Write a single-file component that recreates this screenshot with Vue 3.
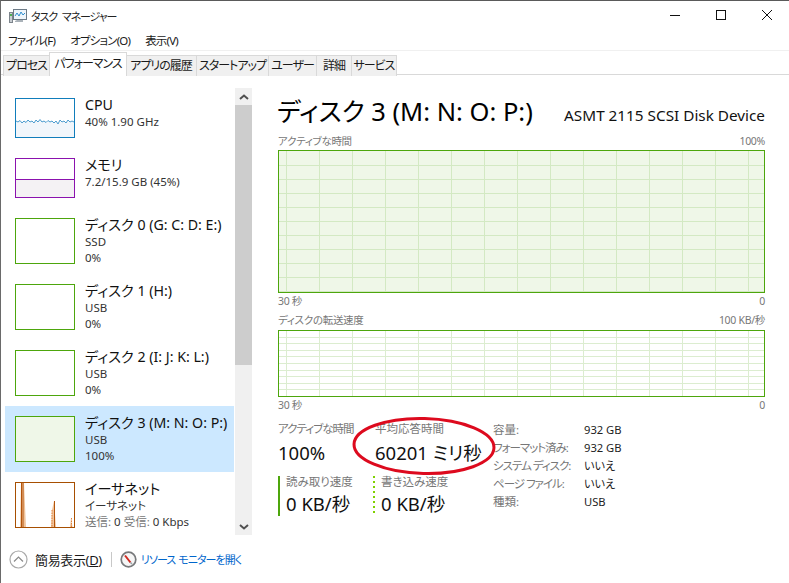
<script setup>
const tabs = ['プロセス', 'パフォーマンス', 'アプリの履歴', 'スタートアップ', 'ユーザー', '詳細', 'サービス']
const menus = ['ファイル(F)', 'オプション(O)', '表示(V)']
const items = [
  { kind: 'cpu', cls: 'short', name: 'CPU', lines: ['40%  1.90 GHz'] },
  { kind: 'mem', cls: 'short', name: 'メモリ', lines: ['7.2/15.9 GB (45%)'] },
  { kind: 'disk', name: 'ディスク 0 (G: C: D: E:)', lines: ['SSD', '0%'] },
  { kind: 'disk', name: 'ディスク 1 (H:)', lines: ['USB', '0%'] },
  { kind: 'disk', name: 'ディスク 2 (I: J: K: L:)', lines: ['USB', '0%'] },
  { kind: 'full', active: true, name: 'ディスク 3 (M: N: O: P:)', lines: ['USB', '100%'] },
  { kind: 'net', name: 'イーサネット', lines: ['イーサネット'], net: true }
]
const facts = [
  { k: '容量:', v: '932 GB' },
  { k: 'フォーマット済み:', v: '932 GB', tight: true },
  { k: 'システム ディスク:', v: 'いいえ', tight: true },
  { k: 'ページ ファイル:', v: 'いいえ', tight: true },
  { k: '種類:', v: 'USB' }
]
</script>

<template>
  <div class="win">
    <header class="titlebar">
      <svg class="appicon" width="18" height="16" viewBox="0 0 18 16">
        <rect x="0.5" y="4.5" width="3" height="10" fill="#c9ced3" stroke="#7d858c" />
        <rect x="1" y="6" width="2" height="2" fill="#4caf50" />
        <rect x="4.5" y="1.5" width="13" height="10" fill="#eef5fb" stroke="#6c7a86" />
        <path d="M6 8 L8 5 L10 8 L12 4 L14 7 L16 5" fill="none" stroke="#2f8fd0" stroke-width="1" />
        <path d="M8 12 H14 V14 H6 V13" fill="#aab2b9" />
      </svg>
      <span class="wintitle">タスク マネージャー</span>
      <div class="caption">
        <svg width="12" height="12" viewBox="0 0 12 12"><path d="M1 6.500 H11" stroke="#111" /></svg>
        <svg width="12" height="12" viewBox="0 0 12 12"><rect x="1.500" y="1.500" width="9" height="9" fill="none" stroke="#111" /></svg>
        <svg width="12" height="12" viewBox="0 0 12 12"><path d="M1 1 L11 11 M11 1 L1 11" stroke="#111" /></svg>
      </div>
    </header>
    <nav class="menu">
      <span v-for="m in menus" :key="m">{{ m }}</span>
    </nav>
    <div class="tabs">
      <span v-for="(t, i) in tabs" :key="t" class="tab" :class="{ sel: i === 1 }">{{ t }}</span>
    </div>

    <div class="body">
      <aside class="side">
        <div class="list">
          <div v-for="it in items" :key="it.name" class="row" :class="[it.cls, { active: it.active }]">
            <div class="thumb" :class="it.kind">
              <svg v-if="it.kind === 'cpu'" width="58" height="38" viewBox="0 0 58 38">
                <path d="M0 22 L2 23 L4 21.5 L6 24 L8 22 L10 23.5 L12 21 L14 23 L16 22 L18 24 L20 21 L22 23 L24 20.5 L26 23 L28 22 L30 23.5 L32 21.5 L34 23 L36 22 L38 24 L40 22 L42 25 L44 21 L46 23 L48 22 L50 24 L52 21 L54 23 L56 22 L58 23 V38 H0 Z" fill="#f1f6fb" />
                <path d="M0 22 L2 23 L4 21.5 L6 24 L8 22 L10 23.5 L12 21 L14 23 L16 22 L18 24 L20 21 L22 23 L24 20.5 L26 23 L28 22 L30 23.5 L32 21.5 L34 23 L36 22 L38 24 L40 22 L42 25 L44 21 L46 23 L48 22 L50 24 L52 21 L54 23 L56 22 L58 23" fill="none" stroke="#4b9ccf" />
              </svg>
              <div v-else-if="it.kind === 'mem'" class="memfill"></div>
              <svg v-else-if="it.kind === 'net'" width="58" height="44" viewBox="0 0 58 44">
                <path d="M4 44 L5 0 H8 L10 44 Z M35 44 L36 27 L38 18 L40 44 Z M54 44 L55 35 L56.500 44 Z" fill="#f0c49c" />
                <path d="M5.500 0 L5.500 44 M7 0 L7 44 M38.500 18 V44" fill="none" stroke="#b4550c" />
                <path d="M36 27 V44 M55.500 35 V44" fill="none" stroke="#e0803a" stroke-dasharray="1.500 1" />
              </svg>
            </div>
            <div class="info">
              <div class="name">{{ it.name }}</div>
              <div v-for="l in it.lines" :key="l" class="sub">{{ l }}</div>
              <div v-if="it.net" class="sub"><span class="dim">送信:</span> 0 <span class="dim">受信:</span> 0 Kbps</div>
            </div>
          </div>
        </div>
        <div class="scroll">
          <div class="arrow">
            <svg width="10" height="6" viewBox="0 0 10 6"><path d="M1 5 L5 1.500 L9 5" fill="none" stroke="#505050" stroke-width="2" /></svg>
          </div>
          <div class="scrollthumb"></div>
          <div class="track"></div>
          <div class="arrow">
            <svg width="10" height="6" viewBox="0 0 10 6"><path d="M1 1 L5 4.500 L9 1" fill="none" stroke="#505050" stroke-width="2" /></svg>
          </div>
        </div>
      </aside>

      <main class="main">
        <div class="head">
          <h1>ディスク 3 (M: N: O: P:)</h1>
          <span class="model">ASMT 2115 SCSI Disk Device</span>
        </div>
        <div class="axis top"><span>アクティブな時間</span><span>100%</span></div>
        <div class="graph big"></div>
        <div class="axis"><span>30 秒</span><span>0</span></div>
        <div class="axis second"><span>ディスクの転送速度</span><span>100 KB/秒</span></div>
        <div class="graph small"></div>
        <div class="axis"><span>30 秒</span><span>0</span></div>

        <section class="stats">
          <div class="perf">
            <div class="cell c1"><div class="lab tight">アクティブな時間</div><div class="val">100%</div></div>
            <div class="cell c2"><div class="lab">平均応答時間</div><div class="val">60201 ミリ秒</div></div>
            <div class="cell c1 rate solid"><div class="lab">読み取り速度</div><div class="val">0 KB/秒</div></div>
            <div class="cell c2 rate dotted"><div class="lab">書き込み速度</div><div class="val">0 KB/秒</div></div>
          </div>
          <dl class="facts">
            <template v-for="f in facts" :key="f.k">
              <dt :class="{ tight: f.tight }">{{ f.k }}</dt>
              <dd>{{ f.v }}</dd>
            </template>
          </dl>
          <svg class="ring" width="150" height="64" viewBox="0 0 150 64">
            <ellipse cx="75" cy="32" rx="70" ry="27.500" fill="none" stroke="#dd0a1e" stroke-width="3" transform="rotate(1.500 75 32)" />
          </svg>
        </section>
      </main>
    </div>

    <footer class="foot">
      <svg width="19" height="19" viewBox="0 0 19 19">
        <circle cx="9.500" cy="9.500" r="8.500" fill="none" stroke="#a8a8a8" stroke-width="1.200" />
        <path d="M5 11.500 L9.500 7 L14 11.500" fill="none" stroke="#8a8a8a" stroke-width="1.200" />
      </svg>
      <span class="less">簡易表示(<u>D</u>)</span>
      <i class="sep"></i>
      <svg width="17" height="17" viewBox="0 0 17 17">
        <circle cx="8.500" cy="8.500" r="7.300" fill="#f6f6f6" stroke="#77797b" stroke-width="1.700" />
        <path d="M5 4.500 L10.500 11.500" stroke="#cf2a20" stroke-width="2" />
        <path d="M10.500 11.500 L12 13" stroke="#9aa0a5" stroke-width="1.500" />
      </svg>
      <a class="link">リソース モニターを開く</a>
    </footer>
  </div>
</template>

<style>
html, body { margin: 0; background: #fff; }
</style>

<style scoped>
.win {
  width: 789px;
  height: 583px;
  box-sizing: border-box;
  overflow: hidden;
  border-top: 1px solid #5a5a5a;
  border-left: 1px solid #6a6a6a;
  display: flex;
  flex-direction: column;
  background: #fff;
  color: #1a1a1a;
  font-family: "Noto Sans", "Noto Sans CJK JP", sans-serif;
  font-feature-settings: "palt";
  font-size: 12px;
}
.titlebar { height: 29px; flex: none; display: flex; align-items: center; padding-left: 8px; }
.appicon { margin-right: 4px; }
.wintitle { font-size: 11px; letter-spacing: -1.100px; word-spacing: 3px; color: #222; }
.caption { margin-left: auto; margin-top: -2px; display: flex; gap: 34px; padding-right: 16px; }
.menu { height: 20px; flex: none; display: flex; gap: 15px; align-items: center; padding-left: 7px; font-size: 11.500px; letter-spacing: -0.800px; }
.tabs {
  flex: none;
  height: 25px;
  box-sizing: border-box;
  border-top: 1px solid #f0f0f0;
  border-bottom: 1px solid #d9d9d9;
  margin-left: -1px;
  padding: 1px 0 0 3px;
  display: grid;
  grid-template-columns: 47px 76px 71px 72px 48px 35px 45px;
  justify-content: start;
  align-items: end;
}
.tab {
  height: 21px;
  box-sizing: border-box;
  border: 1px solid #d9d9d9;
  border-left-width: 0;
  border-bottom: 0;
  background: #f0f0f0;
  text-align: center;
  line-height: 20px;
  white-space: nowrap;
  margin-bottom: -1px;
  letter-spacing: -1px;
}
.tab:first-child { border-left-width: 1px; }
.tab.sel {
  height: 24px;
  background: #fff;
  border-left-width: 1px;
  line-height: 21px;
  position: relative;
  margin-right: -1px;
  margin-left: -1px;
}
.body { flex: 1; min-height: 0; display: flex; }
.side { width: 251px; flex: none; display: flex; padding-top: 13px; height: 460px; box-sizing: border-box; }
.list { width: 229px; margin-left: 4px; flex: none; height: 447px; overflow: hidden; }
.row { height: 66px; box-sizing: border-box; padding: 10px 0 0 10px; display: flex; }
.row.short { height: 60px; }
.row.active { background: #cce8ff; }
.thumb {
  width: 60px;
  height: 46px;
  flex: none;
  box-sizing: border-box;
  border: 1px solid #4da60c;
  background: #fff;
  overflow: hidden;
}
.thumb svg { display: block; }
.row.short .thumb { height: 40px; }
.thumb.cpu { border-color: #117dbb; }
.thumb.mem { border-color: #8b12ae; display: flex; align-items: flex-end; }
.memfill { width: 100%; height: 17px; background: #f4f2f4; border-top: 1px solid #8b12ae; }
.thumb.full { background: #eff7e8; }
.thumb.net { border-color: #a74f01; }
.info { margin-left: 10px; white-space: nowrap; margin-top: -3px; }
.name { font-size: 14.200px; line-height: 19px; color: #111; }
.sub { font-size: 11.500px; line-height: 16px; color: #333; }
.dim { color: #777; }
.scroll { width: 17px; margin-left: 1px; flex: none; height: 447px; background: #f0f0f0; display: flex; flex-direction: column; }
.arrow { height: 17px; flex: none; display: flex; align-items: center; justify-content: center; }
.scrollthumb { height: 260px; flex: none; background: #cdcdcd; }
.track { flex: 1; }
.main { flex: 1; margin-left: 26px; margin-right: 24px; min-width: 0; }
.head { display: flex; justify-content: space-between; align-items: baseline; margin-top: 20px; height: 31px; }
h1 { margin: 0 0 0 -1px; font-size: 25.500px; font-weight: 400; line-height: 32px; color: #000; white-space: nowrap; }
.model { font-size: 15.300px; color: #111; white-space: nowrap; }
.axis { display: flex; justify-content: space-between; height: 15px; line-height: 15px; font-size: 10.500px; letter-spacing: -0.300px; color: #777; margin-top: 1px; }
.axis.top { margin-top: 8px; height: 16px; }
.axis.second { margin-top: 4px; height: 16px; margin-bottom: 1px; }
.graph { box-sizing: border-box; border: 1px solid #4da60c; margin-top: 0; }
.graph.big {
  height: 143px;
  background-color: #eff7e8;
  background-image:
    repeating-linear-gradient(to right, #d3e9c3 0 1px, transparent 1px 33px),
    repeating-linear-gradient(to bottom, transparent 0 13px, #d3e9c3 13px 14px);
  background-position: 7px 0, 0 1px;
}
.graph.small {
  height: 67px;
  background-color: #fff;
  background-image:
    repeating-linear-gradient(to right, #dcedd0 0 1px, transparent 1px 33px),
    repeating-linear-gradient(to bottom, transparent 0 5.600px, #dcedd0 5.600px 6.600px);
  background-position: 7px 0, 0 0;
}
.stats { position: relative; display: flex; margin-top: 8px; }
.perf { width: 215px; flex: none; display: grid; grid-template-columns: 95px 120px; grid-template-rows: 55px 40px; }
.lab { font-size: 11.500px; line-height: 16px; color: #777; white-space: nowrap; }
.tight { letter-spacing: -1px; }
.val { font-size: 18.500px; line-height: 26px; color: #111; white-space: nowrap; }
.cell .val { margin-top: 3px; }
.c2 { padding-left: 2px; }
.rate { height: 40px; box-sizing: border-box; padding-left: 6px; border-left: 2px solid #4da60c; }
.rate.dotted {
  padding-left: 8px;
  border-left: 0;
  background: repeating-linear-gradient(to bottom, #7fd000 0 2px, transparent 2px 5px) left top / 2px 100% no-repeat;
}
.rate .lab { line-height: 12px; }
.cell.rate .val { margin-top: 3px; }
.facts { margin: 0; display: grid; grid-template-columns: 91px auto; grid-auto-rows: 18px; align-content: start; font-size: 11.500px; line-height: 18px; }
dt { color: #777; white-space: nowrap; }
dd { margin: 0; color: #222; white-space: nowrap; font-size: 11.200px; }
.ring { position: absolute; left: 71px; top: -7px; }
.foot { position: absolute; top: 549px; left: 9px; display: flex; align-items: center; height: 20px; }
.less { margin-left: 7px; font-size: 13px; letter-spacing: -0.350px; color: #1a1a1a; white-space: nowrap; }
.sep { width: 1px; height: 15px; background: #c8c8c8; margin: 0 8px 0 9px; }
.link { margin-left: 4px; color: #0066cc; font-size: 11px; letter-spacing: -0.950px; word-spacing: 1px; white-space: nowrap; }
</style>
